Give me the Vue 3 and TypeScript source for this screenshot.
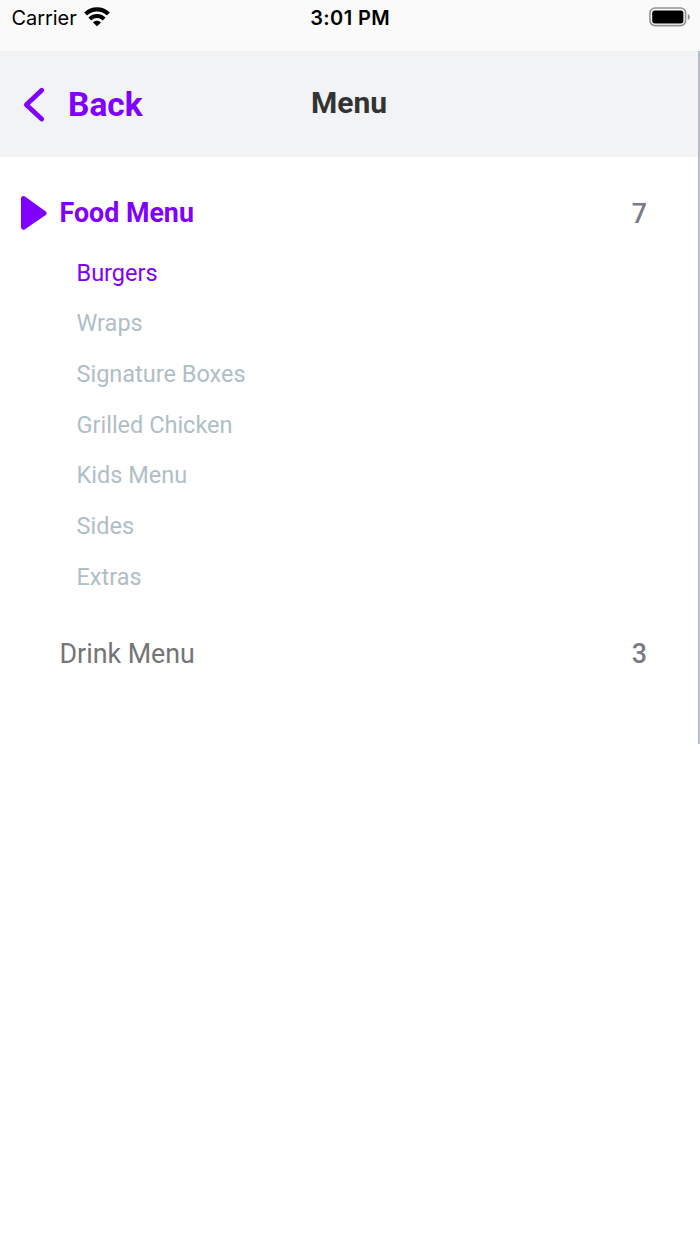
<script setup lang="ts">
import { ref } from 'vue'

interface Category {
  name: string
  count: number
  items: string[]
}

const categories: Category[] = [
  {
    name: 'Food Menu',
    count: 7,
    items: ['Burgers', 'Wraps', 'Signature Boxes', 'Grilled Chicken', 'Kids Menu', 'Sides', 'Extras'],
  },
  { name: 'Drink Menu', count: 3, items: [] },
]

const activeCategory = ref('Food Menu')
const activeItem = ref('Burgers')
</script>

<template>
  <div class="screen">
    <header class="status">
      <div class="carrier">
        <span class="network">Carrier</span>
        <svg width="26" height="21" viewBox="0 0 26 21">
          <g fill="none" stroke="#000" stroke-width="4.1">
            <path d="M1.6 8C8 1.8 18 1.8 24.4 8" />
            <path d="M5.8 12.9C10 9 16 9 20.2 12.9" />
          </g>
          <path d="M13 20.2L9 16.4C11 14.3 15 14.3 17 16.4Z" />
        </svg>
      </div>
      <div class="clock">3:01 PM</div>
      <div class="power">
        <svg width="42" height="20" viewBox="0 0 42 20">
          <rect x="1" y="1" width="35.6" height="17.6" rx="5" fill="none" stroke="#929292" stroke-width="1.6" />
          <rect x="3.2" y="3.6" width="31.2" height="12.8" rx="2.6" />
          <path d="M38.8 7C41.4 8.2 41.4 11.8 38.8 13Z" fill="#8e8e8e" />
        </svg>
      </div>
    </header>

    <nav class="bar">
      <button class="back" type="button">
        <svg width="24" height="38" viewBox="0 0 24 38">
          <path d="M19.7 4.2L4.3 18.7L19.7 33" fill="none" stroke="#8000ff" stroke-width="4.8" stroke-linecap="round" stroke-linejoin="round" />
        </svg>
        <span>Back</span>
      </button>
      <h1 class="title">Menu</h1>
    </nav>

    <main class="menu">
      <section v-for="cat in categories" :key="cat.name" class="category">
        <div class="heading" :class="{ active: cat.name === activeCategory }" @click="activeCategory = cat.name">
          <div class="marker">
            <svg v-if="cat.name === activeCategory" width="28" height="36" viewBox="0 0 28 36">
              <path d="M3.5 3.5L24 18.2L3.5 32.2Z" fill="#8000ff" stroke="#8000ff" stroke-width="5" stroke-linejoin="round" />
            </svg>
          </div>
          <span class="name">{{ cat.name }}</span>
          <span class="count">{{ cat.count }}</span>
        </div>
        <ul v-if="cat.items.length" class="items">
          <li v-for="item in cat.items" :key="item" :class="{ active: item === activeItem }" @click="activeItem = item">
            {{ item }}
          </li>
        </ul>
      </section>
    </main>
    <div class="scrollbar"></div>
  </div>
</template>

<style>
body {
  background: #fff;
}
</style>

<style scoped>
.screen {
  position: relative;
  width: 700px;
  height: 1244px;
  overflow: hidden;
  background: #fff;
  font-family: Roboto, sans-serif;
}
.status {
  display: grid;
  grid-template-columns: 1fr auto 1fr;
  align-items: start;
  height: 51px;
  box-sizing: border-box;
  padding: 6px 8.6px 0 9px;
  background: #fafafa;
  color: #000;
  font-family: Inter, sans-serif;
  font-size: 20px;
  line-height: 24px;
}
.carrier {
  display: flex;
  padding-left: 2.5px;
}
.network {
  width: 72.5px;
  letter-spacing: -0.05px;
}
.clock {
  font-weight: 600;
  letter-spacing: 0.4px;
}
.power {
  display: flex;
  justify-content: flex-end;
  padding-top: 1px;
}
.bar {
  display: grid;
  grid-template-columns: 1fr auto 1fr;
  align-items: center;
  height: 106px;
  padding: 0 24px 0 22px;
  background: #f2f3f5;
}
.back {
  display: flex;
  align-items: center;
  gap: 22px;
  padding: 2px 0 0;
  border: 0;
  background: none;
  color: #8000ff;
  font: 700 33.5px/40px Roboto, sans-serif;
}
.title {
  margin: 0;
  padding-bottom: 2px;
  color: #333;
  font-size: 30px;
  font-weight: 700;
  line-height: 40px;
}
.menu {
  padding: 22px 53px 0 20px;
}
.heading {
  display: flex;
  align-items: center;
  height: 68px;
  color: #757575;
  font-size: 26.8px;
  line-height: 32px;
}
.heading.active .name {
  color: #8000ff;
  font-weight: 700;
}
.marker {
  display: flex;
  width: 39.5px;
}
.name {
  flex: 1;
}
.count {
  padding-top: 1px;
  color: #7b7a88;
  font-weight: 500;
}
.items {
  margin: 0 0 17px;
  padding: 0.7px 0 0 56.5px;
  list-style: none;
}
.items li {
  height: 50.7px;
  color: #b0bec5;
  font-size: 23.5px;
  line-height: 50.7px;
}
.items li.active {
  color: #8000ff;
}
.scrollbar {
  position: absolute;
  top: 51px;
  right: 0;
  width: 2px;
  height: 693px;
  background: #b0bec5;
}
</style>
